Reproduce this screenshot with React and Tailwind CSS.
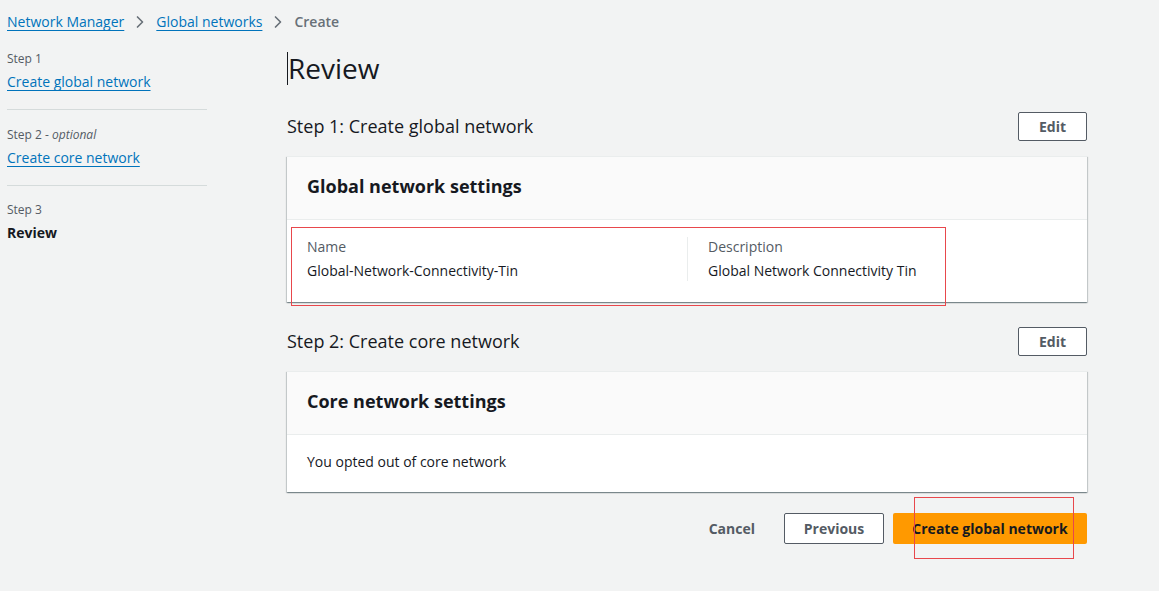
import { ChevronRight } from 'lucide-react'

const font = { fontFamily: '"Open Sans", "Noto Sans", Arial, sans-serif' }

function Card({ title, children, overlay }) {
  return (
    <div className="relative bg-white shadow-[0_1px_1px_0_rgba(0,28,36,0.3),1px_1px_1px_0_rgba(0,28,36,0.15),-1px_1px_1px_0_rgba(0,28,36,0.15)] border-t border-[#eaeded]">
      <div className="h-[63px] flex items-center px-5 pb-[3px] bg-[#fafafa] border-b border-[#eaeded]">
        <h3 className="text-[18px] font-bold text-[#16191f]">{title}</h3>
      </div>
      {children}
      {overlay}
    </div>
  )
}

function SectionHeader({ title }) {
  return (
    <div className="flex items-center justify-between h-[29px]">
      <h2 className="text-[18px] text-[#16191f]">{title}</h2>
      <button className="h-[29px] w-[69px] rounded-[2px] border border-[#545b64] bg-white text-[14px] font-bold text-[#545b64]">
        Edit
      </button>
    </div>
  )
}

export default function App() {
  return (
    <div style={font} className="min-h-[591px] w-full bg-[#f2f3f3] text-[#16191f]">
      <nav className="flex items-center pt-3 pl-[7px] text-[14px] leading-5">
        <a className="text-[#0073bb] underline underline-offset-[3px]">Network Manager</a>
        <ChevronRight className="mx-[6px] text-[#687078]" size={20} strokeWidth={2} />
        <a className="text-[#0073bb] underline underline-offset-[3px]">Global networks</a>
        <ChevronRight className="mx-[6px] text-[#687078]" size={20} strokeWidth={2} />
        <span className="text-[#687078] font-semibold">Create</span>
      </nav>

      <div className="flex">
        <aside className="w-[200px] ml-[7px] pt-[19px] text-[14px]">
          <div className="text-[12px] leading-4 text-[#545b64]">Step 1</div>
          <a className="block mt-[5px] leading-5 text-[#0073bb] underline underline-offset-[3px]">Create global network</a>
          <div className="my-[17px] border-t border-[#d5dbdb]" />
          <div className="text-[12px] leading-4 text-[#545b64]">
            Step 2 - <i>optional</i>
          </div>
          <a className="block mt-[5px] leading-5 text-[#0073bb] underline underline-offset-[3px]">Create core network</a>
          <div className="mt-[17px] mb-[16px] border-t border-[#d5dbdb]" />
          <div className="text-[12px] leading-4 text-[#545b64]">Step 3</div>
          <div className="mt-[5px] leading-5 font-bold">Review</div>
        </aside>

        <main className="ml-[80px] w-[800px] pt-[18px]">
          <h1 className="flex items-center h-[36px] text-[28px] font-normal">
            <span className="inline-block w-px h-[33px] bg-[#16191f]" />
            Review
          </h1>

          <div className="mt-[26px]">
            <SectionHeader title="Step 1: Create global network" />
          </div>
          <div className="mt-[15px]">
            <Card
              title="Global network settings"
              overlay={
                <div className="absolute left-[4px] top-[70px] w-[655px] h-[79px] border border-[#e8474c]" />
              }
            >
              <div className="grid grid-cols-2 px-5 pt-[17px] pb-[21px] text-[14px] leading-5">
                <div>
                  <div className="text-[#545b64]">Name</div>
                  <div className="mt-1">Global-Network-Connectivity-Tin</div>
                </div>
                <div className="border-l border-[#eaeded] pl-5">
                  <div className="text-[#545b64]">Description</div>
                  <div className="mt-1">Global Network Connectivity Tin</div>
                </div>
              </div>
            </Card>
          </div>

          <div className="mt-[25px]">
            <SectionHeader title="Step 2: Create core network" />
          </div>
          <div className="mt-[15px]">
            <Card title="Core network settings">
              <div className="px-5 pt-[17px] pb-[20px] text-[14px] leading-5">You opted out of core network</div>
            </Card>
          </div>

          <div className="relative mt-[21px] flex items-center justify-end gap-[9px] text-[14px] font-bold">
            <button className="h-[31px] px-5 text-[#545b64]">Cancel</button>
            <button className="h-[31px] w-[100px] rounded-[2px] border border-[#545b64] bg-white text-[#545b64]">
              Previous
            </button>
            <button className="h-[31px] w-[194px] rounded-[2px] bg-[#ff9900] text-[#16191f]">Create global network</button>
            <div className="absolute right-[13px] top-[-16px] w-[160px] h-[62px] border border-[#e8474c]" />
          </div>
        </main>
      </div>
    </div>
  )
}
